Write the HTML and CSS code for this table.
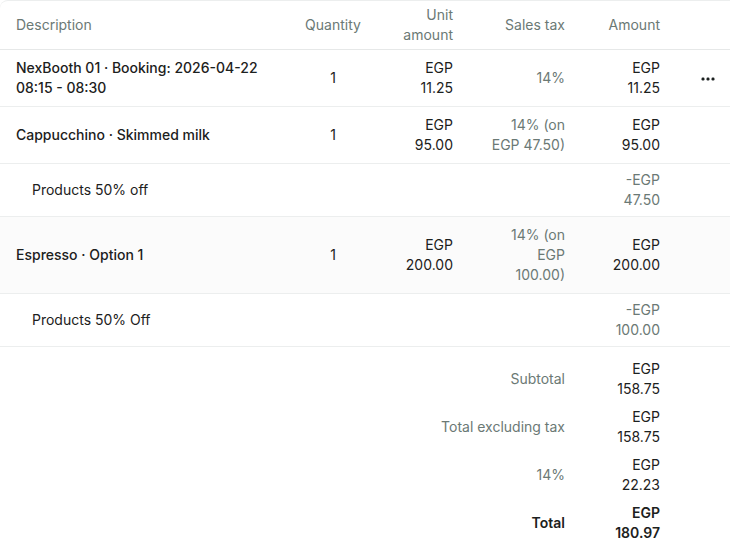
FILE: index.html
```html
<!DOCTYPE html>
<html lang="en">
<head>
<meta charset="utf-8">
<title>Invoice items</title>
<link rel="stylesheet" href="styles.css">
</head>
<body>
<div class="card">
  <table class="items">
    <colgroup>
      <col class="c-desc"><col class="c-qty"><col class="c-unit"><col class="c-tax"><col class="c-amt"><col class="c-act">
    </colgroup>
    <thead>
      <tr>
        <th class="left">Description</th>
        <th class="center">Quantity</th>
        <th class="right">Unit<br>amount</th>
        <th class="right">Sales tax</th>
        <th class="right">Amount</th>
        <th></th>
      </tr>
    </thead>
    <tbody>
      <tr>
        <td class="desc">NexBooth 01 · Booking: 2026-04-22 08:15 - 08:30</td>
        <td class="center">1</td>
        <td class="right">EGP<br>11.25</td>
        <td class="right muted">14%</td>
        <td class="right">EGP<br>11.25</td>
        <td class="act"><svg width="14" height="4" viewBox="0 0 14 4"><rect x="0.5" y="0.5" width="3" height="3" rx="1.2"/><rect x="5.5" y="0.5" width="3" height="3" rx="1.2"/><rect x="10.5" y="0.5" width="3" height="3" rx="1.2"/></svg></td>
      </tr>
      <tr>
        <td class="desc">Cappucchino · Skimmed milk</td>
        <td class="center">1</td>
        <td class="right">EGP<br>95.00</td>
        <td class="right muted">14% (on<br>EGP 47.50)</td>
        <td class="right">EGP<br>95.00</td>
        <td></td>
      </tr>
      <tr class="discount">
        <td class="sub">Products 50% off</td>
        <td></td>
        <td></td>
        <td></td>
        <td class="right muted">-EGP<br>47.50</td>
        <td></td>
      </tr>
      <tr class="hover">
        <td class="desc">Espresso · Option 1</td>
        <td class="center">1</td>
        <td class="right">EGP<br>200.00</td>
        <td class="right muted">14% (on<br>EGP<br>100.00)</td>
        <td class="right">EGP<br>200.00</td>
        <td></td>
      </tr>
      <tr class="discount">
        <td class="sub">Products 50% Off</td>
        <td></td>
        <td></td>
        <td></td>
        <td class="right muted">-EGP<br>100.00</td>
        <td></td>
      </tr>
    </tbody>
    <tbody class="summary">
      <tr class="first">
        <td colspan="4" class="right muted">Subtotal</td>
        <td class="right">EGP<br>158.75</td>
        <td></td>
      </tr>
      <tr>
        <td colspan="4" class="right muted">Total excluding tax</td>
        <td class="right">EGP<br>158.75</td>
        <td></td>
      </tr>
      <tr>
        <td colspan="4" class="right muted">14%</td>
        <td class="right">EGP<br>22.23</td>
        <td></td>
      </tr>
      <tr class="total">
        <td colspan="4" class="right">Total</td>
        <td class="right">EGP<br>180.97</td>
        <td></td>
      </tr>
    </tbody>
  </table>
</div>
</body>
</html>
```
FILE: styles.css
```css
html, body {
  margin: 0;
  padding: 0;
  background: #ffffff;
  overflow: hidden;
}

body {
  font-family: Inter, "Noto Sans", sans-serif;
  font-size: 14px;
  line-height: 20px;
  color: #1c2120;
}

.card {
  width: 744px;
  border-top: 1px solid #eceeee;
  border-top-left-radius: 8px;
  overflow: hidden;
}

.items {
  width: 740px;
  table-layout: fixed;
  border-collapse: separate;
  border-spacing: 0;
}

.c-desc { width: 289px; }
.c-qty { width: 88px; }
.c-unit { width: 92px; }
.c-tax { width: 112px; }
.c-amt { width: 95px; }
.c-act { width: 64px; }

th {
  font-weight: 400;
  color: #6b7975;
  padding: 4px 16px;
  vertical-align: middle;
  border-bottom: 1px solid #e6e8e8;
}

td {
  padding: 8px 16px;
  vertical-align: middle;
  border-bottom: 1px solid #eceeee;
}

.left { text-align: left; }
.center { text-align: center; }
.right { text-align: right; }
.muted { color: #6b7975; }

.desc {
  font-weight: 500;
}

.sub {
  padding-left: 32px;
}

.discount td {
  padding-top: 6px;
  padding-bottom: 6px;
}

.hover td {
  background: #fbfbfb;
}

.act {
  text-align: center;
  padding: 0;
  line-height: 0;
}

.act svg {
  fill: #1c2120;
}

.summary td {
  border-bottom: none;
  padding-top: 4px;
  padding-bottom: 4px;
}

.summary .first td {
  padding-top: 12px;
}

.summary .total td {
  font-weight: 600;
}
```
